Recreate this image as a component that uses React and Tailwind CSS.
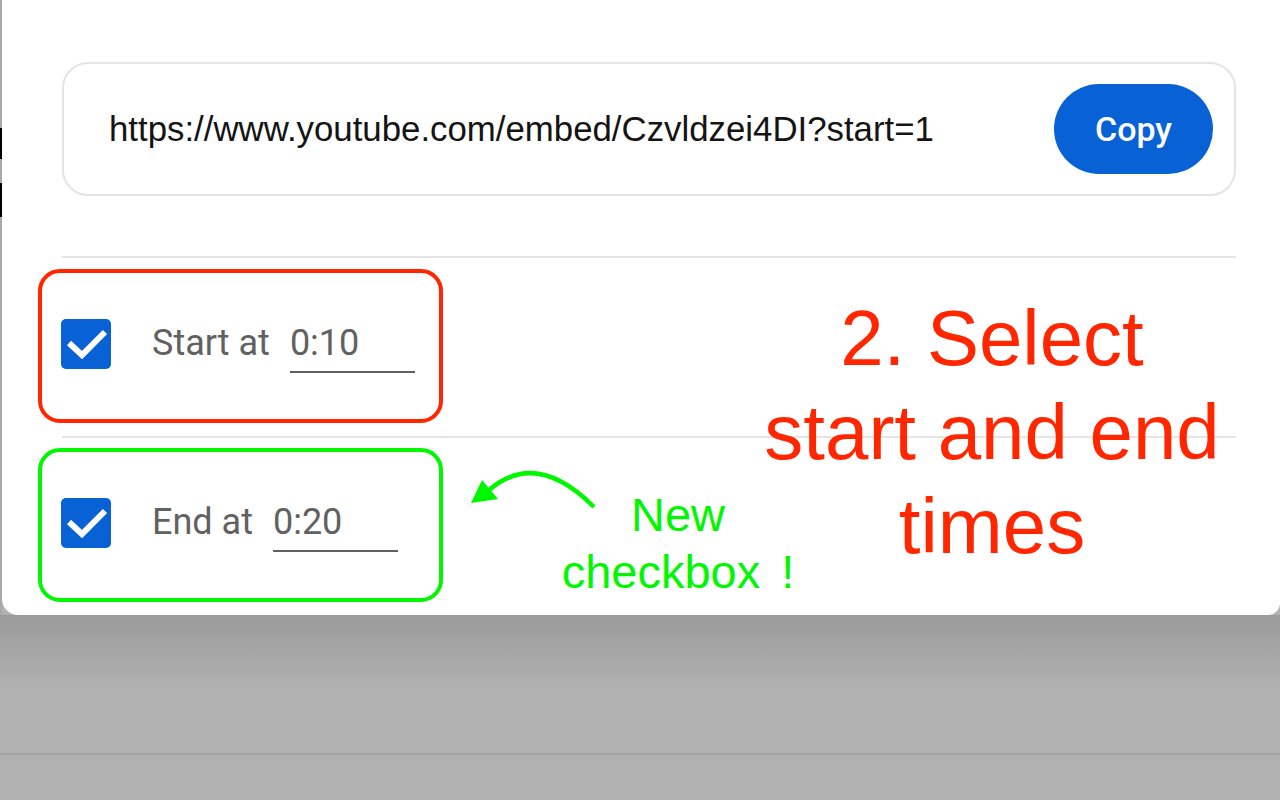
import React from "react";

function Check() {
  return (
    <div className="w-[50px] h-[50px] rounded-[5px] bg-[#0862d6] flex items-center justify-center shrink-0">
      <svg width="50" height="50" viewBox="0 0 50 50">
        <path d="M8 24 L21 36 L44 13" fill="none" stroke="white" strokeWidth="6" />
      </svg>
    </div>
  );
}

function Row({ label, value, color }) {
  return (
    <div className={`-ml-[24px] w-[405px] h-[154px] rounded-[22px] border-[4px] ${color} flex items-start pl-[19px]`}>
      <div className="mt-[46px]">
        <Check />
      </div>
      <div className="mt-[50px] ml-[41px] flex items-baseline font-['Roboto',sans-serif] text-[36px] leading-[40px] text-[#616161]">
        <span>{label}</span>
        <span className="ml-[20px] w-[125px] border-b-2 border-[#616161] pb-[8px]">{value}</span>
      </div>
    </div>
  );
}

export default function App() {
  return (
    <div className="w-[1280px] h-[800px] bg-[#b1b1b1] flex flex-col overflow-hidden">
      <div className="h-[615px] flex shrink-0">
        <div className="w-[2px] flex flex-col bg-[#a9a9a9]">
          <div className="h-[128px]" />
          <div className="h-[31px] bg-black" />
          <div className="h-[24px]" />
          <div className="h-[34px] bg-black" />
          <div className="flex-1" />
        </div>
        <div className="relative flex-1 bg-white rounded-bl-[16px] rounded-br-[12px] pl-[60px] pr-[44px] pt-[62px] flex flex-col">
          <div className="h-[134px] rounded-[26px] border-2 border-[#e4e4e4] flex items-center pl-[45px] pr-[21px]">
            <span className="flex-1 font-['Liberation_Sans',Arial,sans-serif] text-[34.8px] text-[#141414]">
              https://www.youtube.com/embed/Czvldzei4DI?start=1
            </span>
            <button className="w-[159px] h-[90px] rounded-full bg-[#0862d6] text-white font-['Roboto',sans-serif] font-medium text-[34px]">
              Copy
            </button>
          </div>
          <div className="mt-[60px] h-[2px] bg-[#e5e5e5]" />
          <div className="mt-[11px]">
            <Row label="Start at" value="0:10" color="border-[#ff2600]" />
          </div>
          <div className="mt-[13px] h-[2px] bg-[#e5e5e5]" />
          <div className="mt-[10px]">
            <Row label="End at" value="0:20" color="border-[#00f700]" />
          </div>

          <div className="absolute left-[690px] top-[291px] w-[600px] text-center font-['Liberation_Sans',Arial,sans-serif] text-[78px] leading-[94px] text-[#ff2600] whitespace-nowrap">
            2. Select<br />start and end<br />times
          </div>

          <div className="absolute left-[526px] top-[486px] w-[300px] text-center font-['Liberation_Sans',Arial,sans-serif] text-[47px] leading-[57px] text-[#00f700] whitespace-nowrap">
            New<br />checkbox<span className="ml-[21px]">!</span>
          </div>

          <svg className="absolute left-[-2px] top-0" width="700" height="615" viewBox="0 0 700 615" style={{ pointerEvents: "none" }}>
            <path d="M594 507 Q535 448 487 492" fill="none" stroke="#00f700" strokeWidth="4.5" />
            <polygon points="471,503 482,480 498,499" fill="#00f700" />
          </svg>
        </div>
      </div>
      <div className="h-[75px] bg-gradient-to-b from-[#9b9b9b] to-[#b1b1b1]" />
      <div className="h-[63px]" />
      <div className="h-[2px] bg-[#a2a2a2]" />
      <div className="flex-1" />
    </div>
  );
}
